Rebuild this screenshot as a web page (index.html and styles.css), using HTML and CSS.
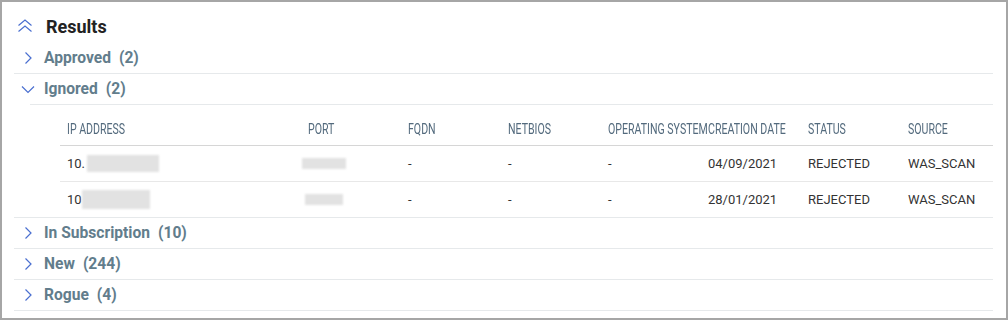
FILE: index.html
```html
<!DOCTYPE html>
<html>
<head>
<meta charset="utf-8">
<link rel="stylesheet" href="styles.css">
</head>
<body>
<div class="panel">
  <div class="title">
    <svg class="dbl" width="16" height="14" viewBox="0 0 16 14"><path d="M1.5 6.5 L8 1 L14.5 6.5 M1.5 12.5 L8 7 L14.5 12.5" fill="none" stroke="#4a6fd0" stroke-width="1.2"/></svg>
    <span>Results</span>
  </div>
  <div class="group">
    <div class="ghead"><svg class="chev" width="14" height="14" viewBox="0 0 14 14"><path d="M4.5 1.5 L10 7 L4.5 12.5" fill="none" stroke="#4a6fd0" stroke-width="1.2"/></svg><span class="glabel">Approved</span><span class="gcount">(2)</span></div>
  </div>
  <div class="group open">
    <div class="ghead"><svg class="chev" width="14" height="14" viewBox="0 0 14 14"><path d="M1 4.5 L7 10.5 L13 4.5" fill="none" stroke="#4a6fd0" stroke-width="1.2"/></svg><span class="glabel">Ignored</span><span class="gcount">(2)</span></div>
    <div class="gbody">
      <div class="table">
        <div class="trow thead">
          <div class="c c1"><span class="hl">IP ADDRESS</span></div><div class="c"><span class="hl">PORT</span></div><div class="c"><span class="hl">FQDN</span></div><div class="c"><span class="hl">NETBIOS</span></div><div class="c"><span class="hl">OPERATING SYSTEM</span></div><div class="c"><span class="hl">CREATION DATE</span></div><div class="c"><span class="hl">STATUS</span></div><div class="c clast"><span class="hl">SOURCE</span></div>
        </div>
        <div class="trow">
          <div class="c c1">10.<span class="blur b-ip1"></span></div><div class="c"><span class="blur b-port1"></span></div><div class="c">-</div><div class="c">-</div><div class="c">-</div><div class="c">04/09/2021</div><div class="c">REJECTED</div><div class="c clast">WAS_SCAN</div>
        </div>
        <div class="trow last">
          <div class="c c1">10<span class="blur b-ip2"></span></div><div class="c"><span class="blur b-port2"></span></div><div class="c">-</div><div class="c">-</div><div class="c">-</div><div class="c">28/01/2021</div><div class="c">REJECTED</div><div class="c clast">WAS_SCAN</div>
        </div>
      </div>
    </div>
  </div>
  <div class="group">
    <div class="ghead"><svg class="chev" width="14" height="14" viewBox="0 0 14 14"><path d="M4.5 1.5 L10 7 L4.5 12.5" fill="none" stroke="#4a6fd0" stroke-width="1.2"/></svg><span class="glabel">In Subscription</span><span class="gcount">(10)</span></div>
  </div>
  <div class="group">
    <div class="ghead"><svg class="chev" width="14" height="14" viewBox="0 0 14 14"><path d="M4.5 1.5 L10 7 L4.5 12.5" fill="none" stroke="#4a6fd0" stroke-width="1.2"/></svg><span class="glabel">New</span><span class="gcount">(244)</span></div>
  </div>
  <div class="group">
    <div class="ghead"><svg class="chev" width="14" height="14" viewBox="0 0 14 14"><path d="M4.5 1.5 L10 7 L4.5 12.5" fill="none" stroke="#4a6fd0" stroke-width="1.2"/></svg><span class="glabel">Rogue</span><span class="gcount">(4)</span></div>
  </div>
</div>
</body>
</html>
```
FILE: styles.css
```css
html, body { margin: 0; padding: 0; background: #fff; }
body { font-family: Roboto, "Liberation Sans", sans-serif; }
.panel {
  width: 1008px; height: 320px; box-sizing: border-box;
  border: 2px solid #a6a6a6; background: #fff; overflow: hidden;
}
.title {
  height: 41px; display: flex; align-items: center;
  padding-left: 15px; padding-top: 8px; box-sizing: border-box;
}
.title .dbl { margin-right: 13px; margin-top: -2px; }
.title span { font-size: 18px; font-weight: 700; color: #222; }
.group { margin: 0 13px 0 12px; border-bottom: 1px solid #e6e9eb; }
.ghead { height: 30px; display: flex; align-items: center; padding-left: 7px; }
.chev { margin-right: 9px; }
.glabel, .gcount { font-size: 15.6px; font-weight: 700; color: #627d8c; }
.gcount { margin-left: 8px; }
.gbody { margin-left: 16px; border-top: 1px solid #e6e9eb; padding-left: 30px; }
.table { display: flex; flex-direction: column; }
.trow { display: flex; height: 36px; align-items: center; border-bottom: 1px solid #e8e8e8; box-sizing: border-box; font-size: 13px; color: #333; }
.trow.last { border-bottom: none; height: 35px; }
.thead { height: 41px; border-bottom: 1px solid #d6d6d6; padding-top: 8px; }
.hl { display: inline-block; font-size: 14.5px; color: #536a7d; transform: scaleX(0.73); transform-origin: left center; }
.c { width: 100px; padding-left: 8px; box-sizing: border-box; white-space: nowrap; display: flex; align-items: center; }
.c1 { width: 240px; padding-left: 7px; }
.clast { width: 93px; }
.blur { display: inline-block; background: #e2e2e2; filter: blur(0.8px); }
.b-ip1 { width: 72px; height: 17px; margin-left: 2px; }
.b-port1 { width: 44px; height: 11px; margin-left: -6px; }
.b-ip2 { width: 68px; height: 19px; margin-left: 0px; }
.b-port2 { width: 38px; height: 11px; margin-left: -3px; }
```
